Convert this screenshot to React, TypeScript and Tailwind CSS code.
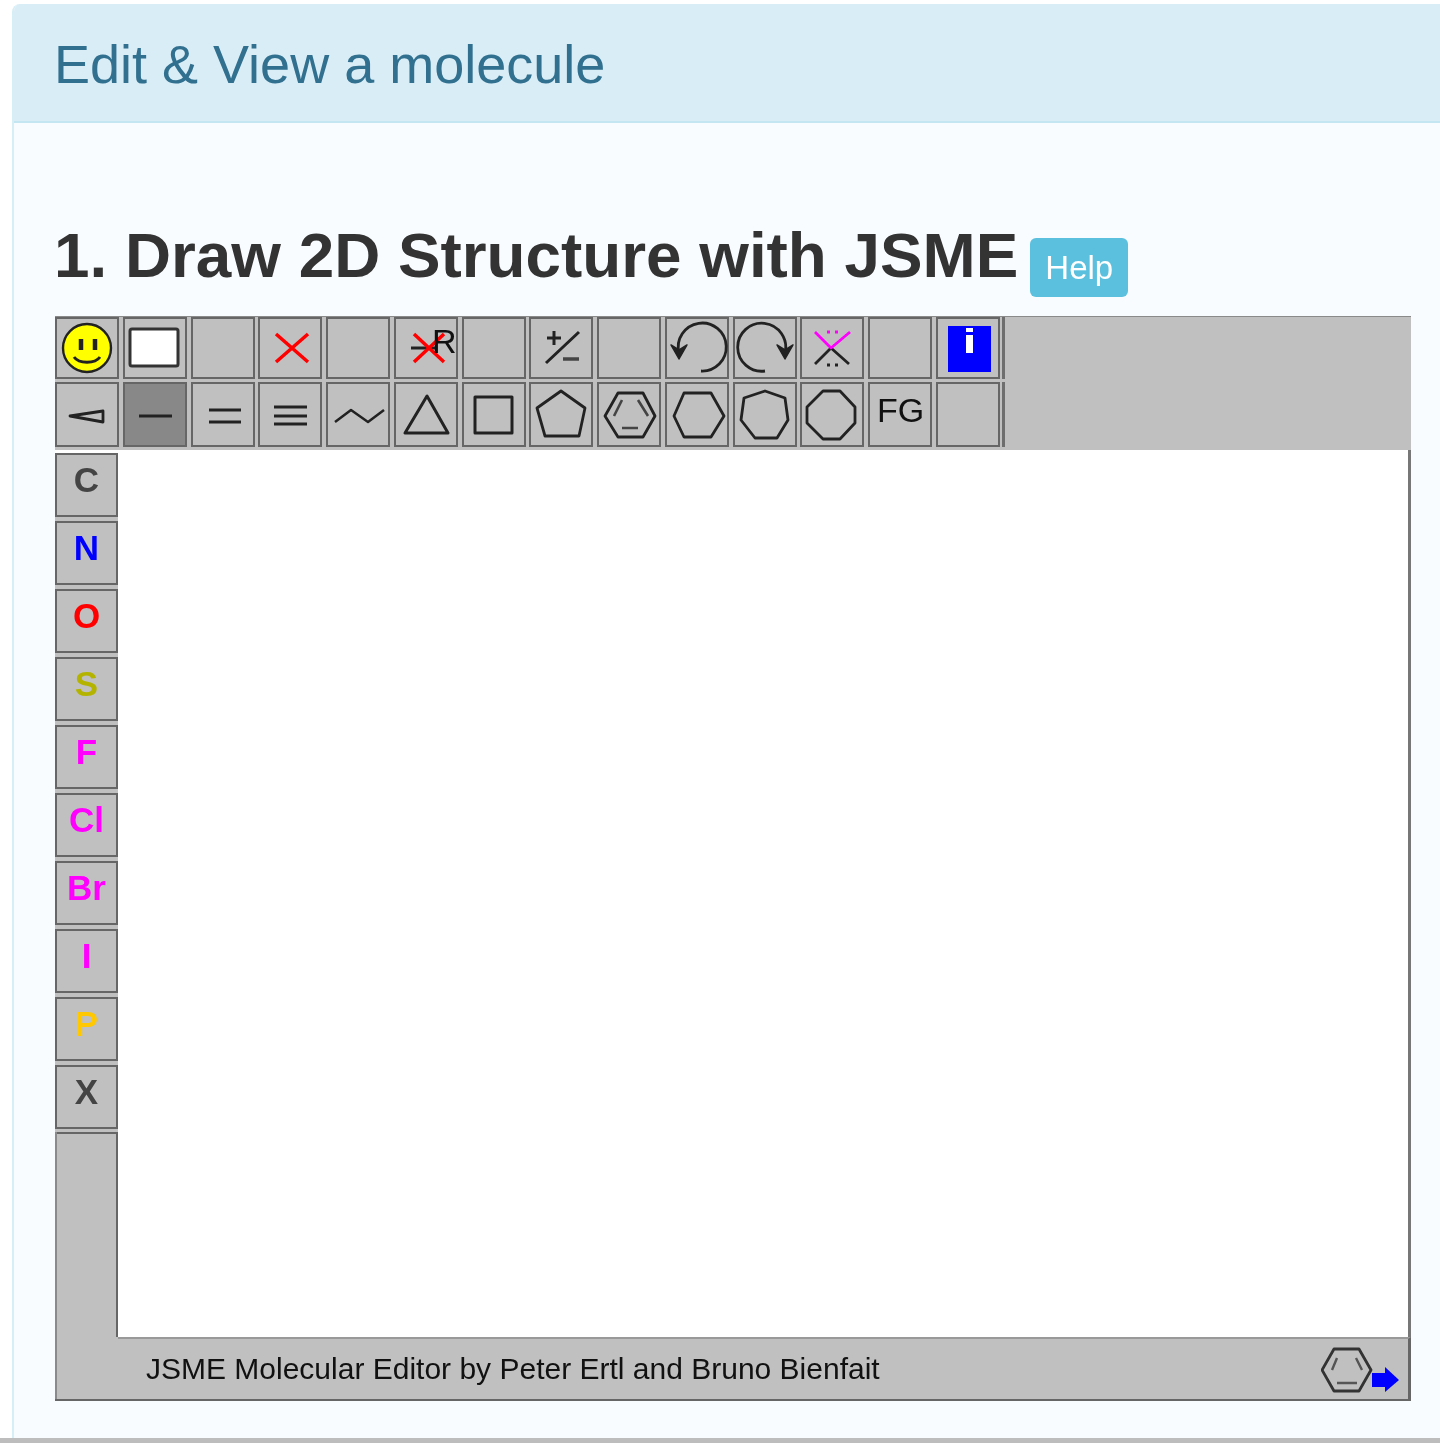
import React from "react";

const sans = "font-['Liberation_Sans',Arial,sans-serif]";

function Ic({ children }: { children?: React.ReactNode }) {
  return (
    <svg viewBox="0 0 64 64" className="w-[64px] h-[64px] shrink-0 -m-[2px] overflow-visible" fill="none" stroke="#222" strokeWidth="2.8" strokeLinejoin="round">
      {children}
    </svg>
  );
}

function Btn({ children, active }: { children?: React.ReactNode; active?: boolean }) {
  return (
    <div className={`w-[64px] h-full shrink-0 border-2 border-[#666666] flex items-start justify-start ${active ? "bg-[#888888]" : "bg-[#c0c0c0]"}`}>
      <Ic>{children}</Ic>
    </div>
  );
}

const T = ({ x, y, s = 34, children }: { x: number; y: number; s?: number; children: string }) => (
  <text x={x} y={y} fontSize={s} fill="#111" stroke="none" fontFamily="'Liberation Sans', Arial, sans-serif">
    {children}
  </text>
);

const row1 = [
  <>
    <circle cx="32" cy="31" r="24" fill="#ffff00" stroke="#222" strokeWidth="2.4" />
    <path d="M26 22v11M40 22v11" stroke="#222" strokeWidth="4.500" />
    <path d="M19 40c5 7 21 7 26 0" stroke="#222" strokeWidth="3" />
  </>,
  <rect x="7" y="12" width="48" height="37" rx="2" fill="#ffffff" stroke="#333" strokeWidth="3" />,
  null,
  <path d="M18 17l32 28M50 17L18 45" stroke="#ff0000" strokeWidth="3.500" />,
  null,
  <>
    <path d="M17 31h25" />
    <path d="M20 17l30 28M50 17L20 45" stroke="#ff0000" strokeWidth="3.500" />
    <T x={38} y={36}>R</T>
  </>,
  null,
  <>
    <path d="M18 21h14M25 14v14M17 46l33-31" strokeWidth="3" />
    <path d="M34 42h16" strokeWidth="3.500" stroke="#444" />
  </>,
  null,
  <>
    <path d="M36 54A24 24 0 1 0 14 36" strokeWidth="2.800" />
    <path d="M6 28l8 14 8-14-8 5z" fill="#222" stroke="#222" strokeWidth="1.500" />
  </>,
  <>
    <path d="M32 54A24 24 0 1 1 52 36" strokeWidth="2.800" />
    <path d="M44 28l8 14 8-14-8 5z" fill="#222" stroke="#222" strokeWidth="1.500" />
  </>,
  <>
    <path d="M15 47l16-16 18 16" strokeWidth="2.800" />
    <path d="M15 15l16 16 19-16" stroke="#ff00ff" strokeWidth="2.800" />
    <path d="M27 15h3M35 15h3" stroke="#ff00ff" strokeWidth="2.800" />
    <path d="M27 48h3M35 48h3" strokeWidth="2.800" />
  </>,
  null,
  <>
    <rect x="12" y="9" width="43" height="46" fill="#0000ff" stroke="none" />
    <path d="M33.500 11v4M33.500 18v18" stroke="#ffffff" strokeWidth="7" />
  </>,
];

const row2 = [
  <path d="M15 34l33-5v11z" />,
  <path d="M16 34h33" strokeWidth="3" />,
  <path d="M18 28h32M18 40h32" strokeWidth="3" />,
  <path d="M16 25h33M16 34h33M16 42h33" strokeWidth="3" />,
  <path d="M9 40l16-12 17 12 16-12" strokeWidth="2.500" />,
  <path d="M33 14L11 51h43z" strokeWidth="3" />,
  <path d="M13 15h37v36H13z" strokeWidth="3" />,
  <path d="M32 9l24 17-6 28H16L8 26z" />,
  <>
    <path d="M8 34L21 11h25l12 23-12 21H21z" />
    <path d="M17 34l8-16M41 18l10 16M25 46h16" strokeWidth="2.600" stroke="#444" />
  </>,
  <path d="M9 34L19 11h27l13 23-13 21H19z" />,
  <path d="M32 9l20 7 3 22-11 18H22L8 38l3-22z" />,
  <path d="M23 9h17l15 16v16L40 57H23L7 41V25z" />,
  <T x={9} y={40}>FG</T>,
  null,
];

const sides: [string, string][] = [
  ["C", "text-[#444444]"],
  ["N", "text-[#0000ff]"],
  ["O", "text-[#ff0000]"],
  ["S", "text-[#b4b400]"],
  ["F", "text-[#ff00ff]"],
  ["Cl", "text-[#ff00ff]"],
  ["Br", "text-[#ff00ff]"],
  ["I", "text-[#ff00ff]"],
  ["P", "text-[#ffc800]"],
  ["X", "text-[#444444]"],
];

function Jsme() {
  return (
    <div className="w-[1356px] h-[1084px] flex flex-col bg-[#c0c0c0] border-b-2 border-b-[#666666]">
      <div className="flex gap-[3.770px] h-[62px] shrink-0 border-t border-[#8a8a8a] box-content -mt-[1px]">
        {row1.map((c, i) => (
          <Btn key={i}>{c}</Btn>
        ))}
        <div className="w-[3px] h-full bg-[#6e6e6e] -ml-[2px]" />
      </div>
      <div className="flex gap-[3.770px] h-[65px] shrink-0 mt-[3px]">
        {row2.map((c, i) => (
          <Btn key={i} active={i === 1}>
            {c}
          </Btn>
        ))}
        <div className="w-[3px] h-full bg-[#6e6e6e] -ml-[2px]" />
      </div>
      <div className="flex flex-1 min-h-0 mt-[3px]">
        <div className="w-[63px] shrink-0 flex flex-col bg-[#c0c0c0]">
          <div className="h-[3px] bg-white shrink-0" />
          {sides.map(([l, c]) => (
            <div key={l} className="h-[64px] mb-[4px] shrink-0 border-2 border-[#666666] flex justify-center bg-[#c0c0c0]">
              <span className={`${sans} ${c} font-bold text-[35px] leading-[50px]`}>{l}</span>
            </div>
          ))}
          <div className="flex-1 flex flex-col border-l-2 border-l-[#8a8a8a] -mt-[1px]">
            <div className="h-[205px] border-t-2 border-r-2 border-t-[#666666] border-r-[#666666]" />
          </div>
        </div>
        <div className="flex-1 min-w-0 flex flex-col">
          <div className="flex-1 bg-white border-r-[3px] border-[#777777]" />
          <div className="h-[62px] shrink-0 bg-[#c0c0c0] border-t-2 border-t-[#999999] border-r-[3px] border-r-[#666666] flex items-center justify-between pl-[28px] pr-[9px]">
            <span className={`${sans} text-[#111111] text-[30px] leading-[40px] -mt-[1px]`}>
              JSME Molecular Editor by Peter Ertl and Bruno Bienfait
            </span>
            <svg viewBox="0 0 78 48" className="w-[78px] h-[48px] mt-[4px]" fill="none" stroke="#333" strokeWidth="2.800" strokeLinejoin="round">
              <path d="M1 23L13 2h25l12 21-12 21H13z" />
              <path d="M11 23l5-12M35 11l6 12M16 36h20" stroke="#555" strokeWidth="2.400" />
              <path d="M51 26h13v-6l14 13-14 12v-5H51z" fill="#0000ff" stroke="none" />
            </svg>
          </div>
        </div>
      </div>
    </div>
  );
}

export default function App() {
  return (
    <div className={`h-[1443px] overflow-hidden bg-white flex flex-col ${sans} blur-[0.5px]`}>
      <div className="flex-1 min-h-0 pl-[12px] pt-[4px]">
        <div className="h-full bg-[#f9fcfe] border-l-2 border-l-[#d6eff6] rounded-tl-[8px] overflow-hidden">
          <div className="h-[119px] bg-[#d9edf7] border-b-[2px] border-[#c4e6f2] pl-[40px] flex items-center">
            <span className="text-[#31708f] text-[54px] leading-[60px] mt-[2px]">Edit &amp; View a molecule</span>
          </div>
          <div className="pl-[40px] pt-[90px]">
            <div className="flex items-start h-[84px]">
              <h3 className="text-[#333333] font-bold text-[63.800px] leading-[84px] whitespace-nowrap">1. Draw 2D Structure with JSME</h3>
              <div className="ml-[12px] mt-[25px] w-[98px] h-[59px] rounded-[6px] bg-[#5bc0de] text-white text-[33px] flex items-center justify-center">
                Help
              </div>
            </div>
            <div className="mt-[20px] ml-[1px]">
              <Jsme />
            </div>
          </div>
        </div>
      </div>
      <div className="h-[5px] shrink-0 bg-[#bdbdbd]" />
    </div>
  );
}
